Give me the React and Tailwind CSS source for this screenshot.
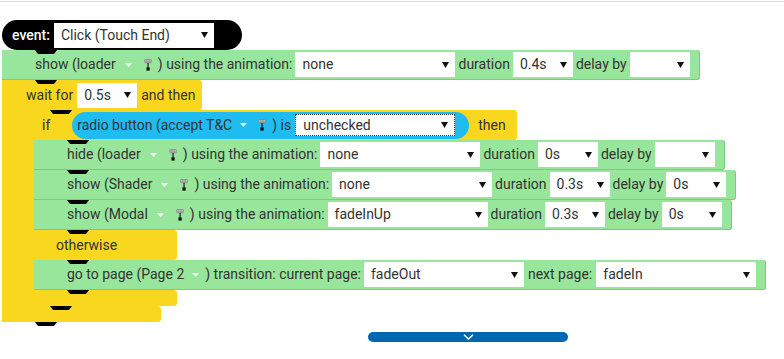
import React from "react";

const GREEN = "bg-[#98e69b]";
const YELLOW = "bg-[#f9d71f]";

function Notch({ className = "left-[33px] top-0" }) {
  return (
    <svg className={`absolute ${className}`} width="22" height="4" viewBox="0 0 22 4">
      <polygon points="0,0 22,0 19,4 3,4" fill="#000" />
    </svg>
  );
}

function Tri() {
  return (
    <svg width="7" height="6" viewBox="0 0 7 6" className="shrink-0">
      <polygon points="0,0 7,0 3.5,6" fill="#111" />
    </svg>
  );
}

function Caret({ className = "" }) {
  return (
    <svg width="7" height="4" viewBox="0 0 7 4" className={`shrink-0 ${className}`}>
      <polygon points="0,0 7,0 3.5,4" fill="#fff" fillOpacity="0.85" />
    </svg>
  );
}

function KeyIcon({ className = "" }) {
  return (
    <svg width="8" height="12" viewBox="0 0 8 12" className={`shrink-0 ${className}`}>
      <rect x="0.4" y="0.4" width="7.2" height="3.4" rx="1.4" fill="#e2e2e2" stroke="#777" strokeWidth="0.7" />
      <circle cx="2.5" cy="2.1" r="0.9" fill="none" stroke="#555" strokeWidth="0.6" />
      <circle cx="5.5" cy="2.1" r="0.9" fill="none" stroke="#555" strokeWidth="0.6" />
      <rect x="3.5" y="3.8" width="1.1" height="4.6" fill="#111" />
      <rect x="2.4" y="8.3" width="3.3" height="3.3" fill="#111" />
    </svg>
  );
}

function Select({ w, children, className = "" }) {
  return (
    <div className={`${w} h-[25px] shrink-0 bg-white flex items-center justify-between pl-[7px] pr-[6px] ${className}`}>
      <span>{children}</span>
      <Tri />
    </div>
  );
}

function Stmt({ children }) {
  return (
    <div className={`relative flex items-center h-[30px] w-fit whitespace-nowrap ${GREEN} border-b border-r border-[#7cc980] rounded-r-[3px] pl-[33px] pr-[9px]`}>
      <Notch />
      {children}
    </div>
  );
}

function ShowRow({ verb, target, anim, dur, delay }) {
  return (
    <Stmt>
      <span>
        {verb} ({target}
      </span>
      <Caret className="ml-[9px]" />
      <KeyIcon className="ml-[12px]" />
      <span className="ml-[6px]">) using the animation:</span>
      <Select w="w-[160px]" className="ml-[3px]">{anim}</Select>
      <span className="ml-[3px]">duration</span>
      <Select w="w-[60px]" className="ml-[3px]">{dur}</Select>
      <span className="ml-[3px]">delay by</span>
      <Select w="w-[60px]" className="ml-[3px]">{delay}</Select>
    </Stmt>
  );
}

function IfBlock() {
  return (
    <div className="flex flex-col">
      <div className={`relative flex items-center h-[30px] w-fit whitespace-nowrap ${YELLOW} rounded-r-[3px] pl-[24px] pr-[11px]`}>
        <Notch className="left-[32px] top-0" />
        <span>if</span>
        <div className="ml-[22px] h-[27px] rounded-full bg-[#1fbcf1] flex items-center pl-[5px] pr-[14px]">
          <span>radio button (accept T&amp;C</span>
          <Caret className="ml-[8px]" />
          <KeyIcon className="ml-[11px]" />
          <span className="ml-[6px]">) is</span>
          <div className="ml-[4px] w-[160px] h-[22px] bg-white border border-dotted border-[#333] flex items-center justify-between pl-[7px] pr-[6px]">
            <span>unchecked</span>
            <Tri />
          </div>
        </div>
        <span className="ml-[9px]">then</span>
      </div>
      <div className="flex">
        <div className={`w-[16px] shrink-0 ${YELLOW}`} />
        <div className="flex flex-col">
          <ShowRow verb="hide" target="loader" anim="none" dur="0s" delay="" />
          <ShowRow verb="show" target="Shader" anim="none" dur="0.3s" delay="0s" />
          <ShowRow verb="show" target="Modal" anim="fadeInUp" dur="0.3s" delay="0s" />
        </div>
      </div>
      <div className={`relative flex items-center h-[30px] w-[159px] ${YELLOW} rounded-r-[3px] pl-[38px]`}>
        <Notch className="left-[49px] top-0" />
        <span>otherwise</span>
      </div>
      <div className="flex">
        <div className={`w-[16px] shrink-0 ${YELLOW}`} />
        <Stmt>
          <span>go to page (Page 2</span>
          <Caret className="ml-[8px]" />
          <span className="ml-[6px]">) transition: current page:</span>
          <Select w="w-[160px]" className="ml-[3px]">fadeOut</Select>
          <span className="ml-[4px]">next page:</span>
          <Select w="w-[160px]" className="ml-[4px]">fadeIn</Select>
        </Stmt>
      </div>
      <div className={`relative h-[16px] w-[159px] ${YELLOW} rounded-r-[3px]`}>
        <Notch className="left-[49px] top-0" />
      </div>
    </div>
  );
}

export default function App() {
  return (
    <div className="w-[784px] h-[359px] overflow-hidden bg-white font-['Roboto',sans-serif] text-[14px] text-[#333]">
      <div className="h-px mt-px bg-[#dcdcdc]" />
      <div className="flex flex-col pl-[2px] pt-[18px]">
        <div className="flex items-center h-[30px] w-[240px] rounded-full bg-black pl-[10px]">
          <span className="text-white font-medium">event:</span>
          <Select w="w-[160px]" className="ml-[4px]">Click (Touch End)</Select>
        </div>
        <ShowRow verb="show" target="loader" anim="none" dur="0.4s" delay="" />
        <div className="flex flex-col">
          <div className={`relative flex items-center h-[30px] w-fit whitespace-nowrap ${YELLOW} rounded-r-[3px] pl-[24px] pr-[7px]`}>
            <Notch />
            <span>wait for</span>
            <Select w="w-[60px]" className="ml-[4px]">0.5s</Select>
            <span className="ml-[4px]">and then</span>
          </div>
          <div className="flex">
            <div className={`w-[16px] shrink-0 ${YELLOW}`} />
            <IfBlock />
          </div>
          <div className={`relative h-[16px] w-[159px] ${YELLOW} rounded-r-[3px]`}>
            <Notch className="left-[48px] top-0" />
            <Notch className="left-[33px] top-full" />
          </div>
        </div>
        <div className="ml-[366px] mt-[10px] w-[200px] h-[10px] rounded-full bg-[#0067b4] flex items-center justify-center">
          <svg width="11" height="6" viewBox="0 0 11 6">
            <polyline points="1,0.8 5.5,5 10,0.8" fill="none" stroke="#fff" strokeWidth="1.4" />
          </svg>
        </div>
      </div>
    </div>
  );
}
